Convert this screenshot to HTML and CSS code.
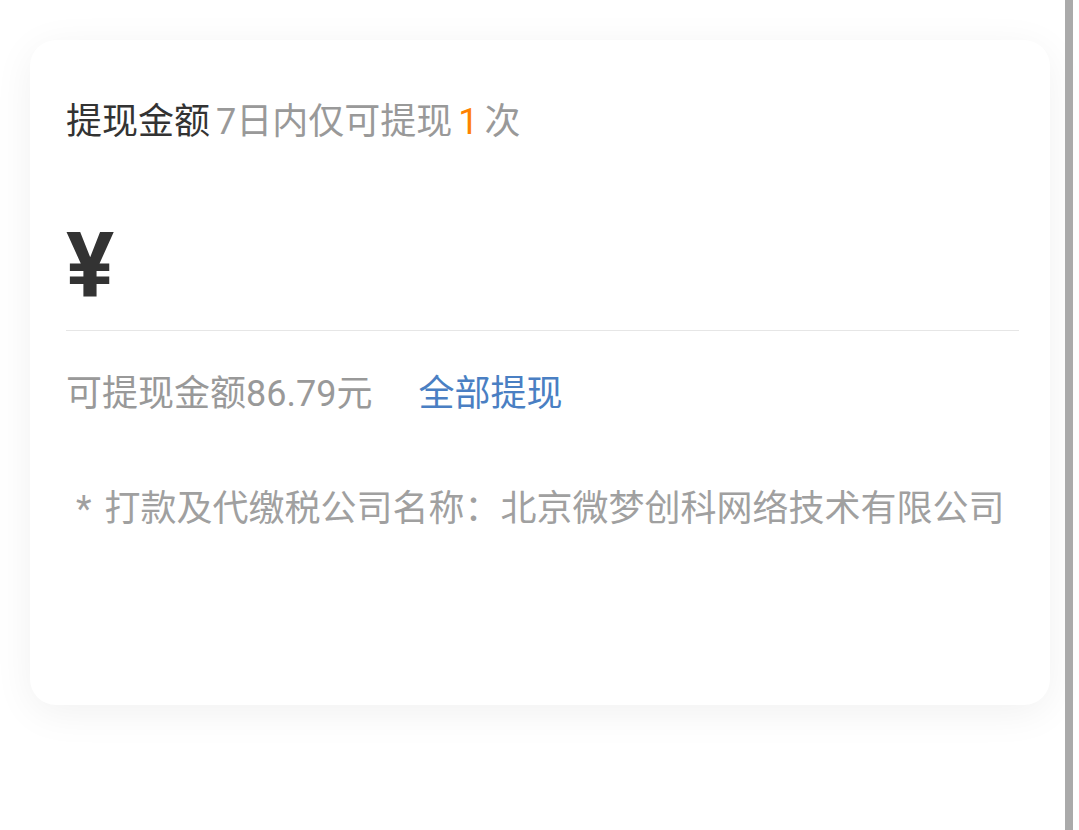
FILE: index.html
```html
<!DOCTYPE html>
<html lang="zh-CN">

<head>
    <meta charset="UTF-8" />
    <meta name="viewport" content="width=device-width, initial-scale=1.0" />
    <title>提现</title>
    <link rel="stylesheet" href="styles.css">
</head>

<body>
    <main class="page">
        <div class="card">
            <div class="title">
                提现金额<span class="hint">7日内仅可提现<em class="count">1</em>次</span>
            </div>
            <div class="amount">
                <span class="yen">¥</span>
            </div>
            <div class="balance">
                <span class="available">可提现金额86.79元</span>
                <a class="all" href="#">全部提现</a>
            </div>
            <p class="note"><span class="star">*</span> 打款及代缴税公司名称：北京微梦创科网络技术有限公司</p>
        </div>
    </main>
    <div class="scrollbar"></div>
</body>

</html>
```

FILE: styles.css
```css
* {
    box-sizing: border-box;
    margin: 0;
    padding: 0;
}

body {
    display: flex;
    height: 100vh;
    overflow: hidden;
    background: white;
    font-family: Roboto, "Noto Sans CJK SC", sans-serif;
    font-size: 36px;
    color: #333;
}

.page {
    flex: 1;
    padding: 40px 15px 0 30px;
}

.scrollbar {
    width: 8px;
    margin-right: 6px;
    background: #aaa;
}

.card {
    height: 665px;
    padding: 57px 31px 0 36px;
    background: white;
    border-radius: 26px;
    box-shadow: 0 8px 40px rgba(0, 0, 0, 0.06);
}

.title {
    line-height: 50px;
}

.hint {
    color: #999;
    margin-left: 6px;
}

.count {
    font-style: normal;
    color: #ff8200;
    margin: 0 6px;
}

.amount {
    padding: 80px 0 23px;
    border-bottom: 1px solid #e6e6e6;
}

.yen {
    display: block;
    font-size: 90px;
    font-weight: 700;
    line-height: 80px;
    color: #333;
}

.balance {
    display: flex;
    gap: 46px;
    margin-top: 38px;
    line-height: 50px;
}

.available {
    color: #999;
}

.all {
    color: #4a7fc3;
    text-decoration: none;
}

.note {
    margin-top: 65px;
    padding-left: 10px;
    line-height: 50px;
    color: #a0a0a0;
}

.star {
    margin-right: 4px;
}
```
